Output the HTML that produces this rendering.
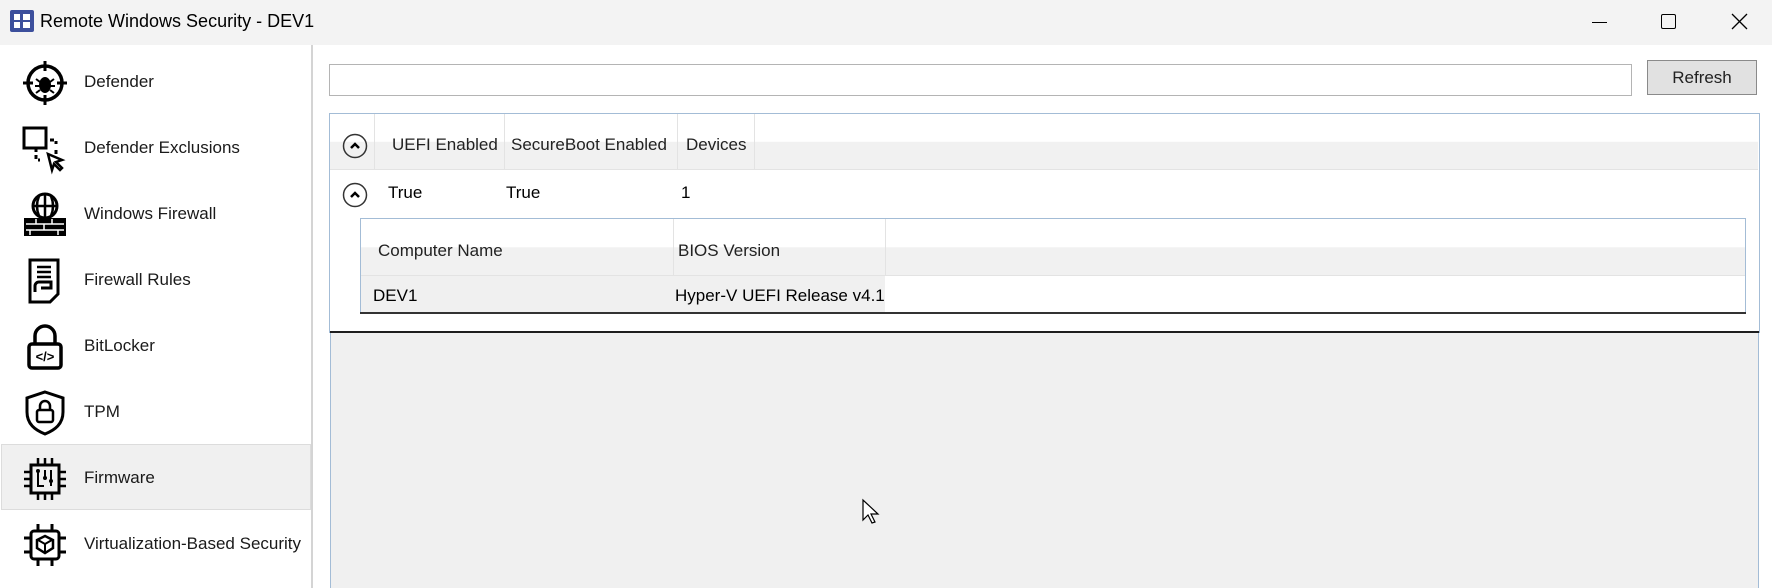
<!DOCTYPE html>
<html><head><style>
body{margin:0;width:1772px;height:588px;overflow:hidden;background:#fff;font-family:"Liberation Sans",sans-serif;color:#000;position:relative}
.a{position:absolute}
.t{font-size:17px;white-space:nowrap}
.item{position:absolute;left:0;width:310px;height:66px}
.item .ic{position:absolute;left:22px;top:11px;width:46px;height:46px}
.item .lb{position:absolute;left:84px;top:23px;font-size:17px;color:#1a1a1a}
svg{overflow:visible}
</style></head><body>
<div class="a" style="left:0;top:0;width:1772px;height:45px;background:#f3f3f3"></div>
<svg class="a" style="left:10px;top:10px" width="24" height="22"><rect x="0" y="0" width="24" height="22" rx="2" fill="#3c4f9c"/><rect x="4" y="4" width="6" height="6" fill="#fff"/><rect x="13" y="4" width="7" height="6" fill="#fff"/><rect x="4" y="12" width="6" height="6" fill="#fff"/><rect x="13" y="12" width="7" height="6" fill="#fff"/></svg>
<div class="a t" style="left:40px;top:11px;font-size:18px">Remote Windows Security - DEV1</div>
<div class="a" style="left:1592px;top:22px;width:15px;height:1px;background:#000"></div>
<div class="a" style="left:1661px;top:14px;width:13px;height:13px;border:1.5px solid #000;border-radius:2px"></div>
<svg class="a" style="left:1732px;top:14px" width="15" height="15"><path d="M0 0L15 15M15 0L0 15" stroke="#000" stroke-width="1.3"/></svg>

<div class="a" style="left:311px;top:45px;width:2px;height:543px;background:#d4d4d4"></div>
<div class="a" style="left:1px;top:444px;width:308px;height:64px;background:#f0f0f0;border:1px solid #dcdcdc"></div>

<div class="item" style="top:49px"><svg class="ic" viewBox="0 0 46 46"><circle cx="23" cy="23" r="17" fill="none" stroke="#000" stroke-width="3.5"/><path d="M23 1v10M23 35v10M1 23h10M35 23h10" stroke="#000" stroke-width="3"/><ellipse cx="23" cy="25" rx="6" ry="8" fill="#000"/><path d="M14 19l4 3M32 19l-4 3M13 26h5M33 26h-5M14 33l4-3M32 33l-4-3" stroke="#000" stroke-width="2"/></svg><div class="lb">Defender</div></div>
<div class="item" style="top:115px"><svg class="ic" viewBox="0 0 46 46"><rect x="2" y="2" width="22" height="20" fill="none" stroke="#000" stroke-width="3"/><path d="M14 22v12h4M28 14h6v4M34 24v4M14 40v0" stroke="#000" stroke-width="3" stroke-dasharray="4 3" fill="none"/><path d="M26 28l14 6-6 2 6 6-2 2-6-6-2 6z" fill="#fff" stroke="#000" stroke-width="2.5"/></svg><div class="lb">Defender Exclusions</div></div>
<div class="item" style="top:181px"><svg class="ic" viewBox="0 0 46 46"><circle cx="23" cy="14" r="12" fill="none" stroke="#000" stroke-width="3"/><path d="M23 2v24M11 14h24M17 4q-4 10 0 20M29 4q4 10 0 20" stroke="#000" stroke-width="2.5" fill="none"/><rect x="2" y="26" width="42" height="18" fill="#000"/><path d="M4 32h38M4 38h38M14 27v5M30 27v5M22 32v6M8 38v5M36 38v5" stroke="#fff" stroke-width="1.5"/></svg><div class="lb">Windows Firewall</div></div>
<div class="item" style="top:247px"><svg class="ic" viewBox="0 0 46 46"><path d="M8 2h28v34l-8 8H8z" fill="none" stroke="#000" stroke-width="3"/><path d="M15 9h14M15 14h14M15 19h14" stroke="#000" stroke-width="2.5"/><path d="M13 34v-6a4 4 0 0 1 4-4h12v6h-10" fill="none" stroke="#000" stroke-width="3"/></svg><div class="lb">Firewall Rules</div></div>
<div class="item" style="top:313px"><svg class="ic" viewBox="0 0 46 46"><path d="M13 20v-8a10 10 0 0 1 20 0v8" fill="none" stroke="#000" stroke-width="3.5"/><rect x="7" y="20" width="32" height="24" rx="3" fill="none" stroke="#000" stroke-width="3.5"/><text x="23" y="37" font-size="13" font-weight="bold" text-anchor="middle" font-family="Liberation Sans">&lt;/&gt;</text></svg><div class="lb">BitLocker</div></div>
<div class="item" style="top:379px"><svg class="ic" viewBox="0 0 46 46"><path d="M23 2l18 6v14c0 12-8 18-18 22C13 40 5 34 5 22V8z" fill="none" stroke="#000" stroke-width="3"/><path d="M18 20v-4a5 5 0 0 1 10 0v4" fill="none" stroke="#000" stroke-width="2.5"/><rect x="15" y="20" width="16" height="12" rx="2" fill="none" stroke="#000" stroke-width="2.5"/></svg><div class="lb">TPM</div></div>
<div class="item" style="top:445px"><svg class="ic" viewBox="0 0 46 46"><rect x="9" y="9" width="28" height="28" fill="none" stroke="#000" stroke-width="3"/><path d="M16 2v7M23 2v7M30 2v7M16 37v7M23 37v7M30 37v7M2 16h7M2 23h7M2 30h7M37 16h7M37 23h7M37 30h7" stroke="#000" stroke-width="2.5"/><path d="M16 14v16h6M23 14v8M29 14v16" stroke="#000" stroke-width="2" fill="none"/><circle cx="16" cy="15" r="2" fill="#000"/><circle cx="23" cy="22" r="2" fill="#000"/><circle cx="29" cy="25" r="2" fill="#000"/></svg><div class="lb">Firmware</div></div>
<div class="item" style="top:511px"><svg class="ic" viewBox="0 0 46 46"><rect x="9" y="9" width="28" height="28" rx="3" fill="none" stroke="#000" stroke-width="3"/><path d="M16 2v7M30 2v7M16 37v7M30 37v7M2 16h7M2 30h7M37 16h7M37 30h7" stroke="#000" stroke-width="3"/><path d="M23 14l8 4v8l-8 5-8-5v-8z" fill="none" stroke="#000" stroke-width="2.5"/><path d="M23 22v8M23 22l-7-4M23 22l7-4" stroke="#000" stroke-width="2"/></svg><div class="lb">Virtualization-Based Security</div></div>

<div class="a" style="left:329px;top:64px;width:1301px;height:30px;border:1px solid #b4b4b4;background:#fff"></div>
<div class="a" style="left:1647px;top:60px;width:110px;height:35px;border:1px solid #8a8a8a;background:#e1e1e1;box-sizing:border-box"></div>
<div class="a t" style="left:1647px;top:68px;width:110px;text-align:center;color:#222">Refresh</div>

<div class="a" style="left:329px;top:113px;width:1429px;height:219px;border:1px solid #a3bcd6;border-bottom:none;background:#fff"></div>
<div class="a" style="left:330px;top:331px;width:1429px;height:2px;background:#1e1e1e"></div>
<div class="a" style="left:330px;top:333px;width:1429px;height:255px;background:#f0f0f0;border-left:1px solid #a3bcd6;border-right:1px solid #a3bcd6;box-sizing:border-box"></div>
<div class="a" style="left:330px;top:114px;width:1428px;height:56px;background:linear-gradient(#fff 0,#fff 50%,#f1f1f1 51%,#f1f1f1 100%);border-bottom:1px solid #e3e3e3;box-sizing:border-box"></div>
<div class="a" style="left:374px;top:114px;width:1px;height:56px;background:#e3e3e3"></div>
<div class="a" style="left:504px;top:114px;width:1px;height:56px;background:#e3e3e3"></div>
<div class="a" style="left:677px;top:114px;width:1px;height:56px;background:#e3e3e3"></div>
<div class="a" style="left:754px;top:114px;width:1px;height:56px;background:#e3e3e3"></div>
<svg class="a" style="left:342px;top:133px" width="26" height="26"><circle cx="13" cy="13" r="11.5" fill="none" stroke="#333" stroke-width="1.5"/><path d="M9 15l4-4 4 4" fill="none" stroke="#000" stroke-width="2.5"/></svg>
<div class="a t" style="left:392px;top:135px;color:#222">UEFI Enabled</div>
<div class="a t" style="left:511px;top:135px;color:#222">SecureBoot Enabled</div>
<div class="a t" style="left:686px;top:135px;color:#222">Devices</div>
<svg class="a" style="left:342px;top:182px" width="26" height="26"><circle cx="13" cy="13" r="11.5" fill="none" stroke="#333" stroke-width="1.5"/><path d="M9 15l4-4 4 4" fill="none" stroke="#000" stroke-width="2.5"/></svg>
<div class="a t" style="left:388px;top:183px">True</div>
<div class="a t" style="left:506px;top:183px">True</div>
<div class="a t" style="left:681px;top:183px">1</div>

<div class="a" style="left:360px;top:218px;width:1386px;height:95px;border:1px solid #a3bcd6;border-bottom:none;background:#fff;box-sizing:border-box"></div>
<div class="a" style="left:361px;top:219px;width:1384px;height:57px;background:linear-gradient(#fff 0,#fff 50%,#f1f1f1 51%,#f1f1f1 100%);border-bottom:1px solid #e3e3e3;box-sizing:border-box"></div>
<div class="a" style="left:673px;top:219px;width:1px;height:57px;background:#e3e3e3"></div>
<div class="a" style="left:885px;top:219px;width:1px;height:57px;background:#e3e3e3"></div>
<div class="a t" style="left:378px;top:241px;color:#222">Computer Name</div>
<div class="a t" style="left:678px;top:241px;color:#222">BIOS Version</div>
<div class="a" style="left:361px;top:276px;width:524px;height:37px;background:#f0f0f0"></div>
<div class="a t" style="left:373px;top:286px">DEV1</div>
<div class="a t" style="left:675px;top:286px">Hyper-V UEFI Release v4.1</div>
<div class="a" style="left:360px;top:312px;width:1386px;height:2px;background:#333"></div>

<svg class="a" style="left:862px;top:499px" width="20" height="28"><path d="M1 1v20l5-5 4 8 3-1-4-8h7z" fill="#fff" stroke="#000" stroke-width="1.2"/></svg>
</body></html>
